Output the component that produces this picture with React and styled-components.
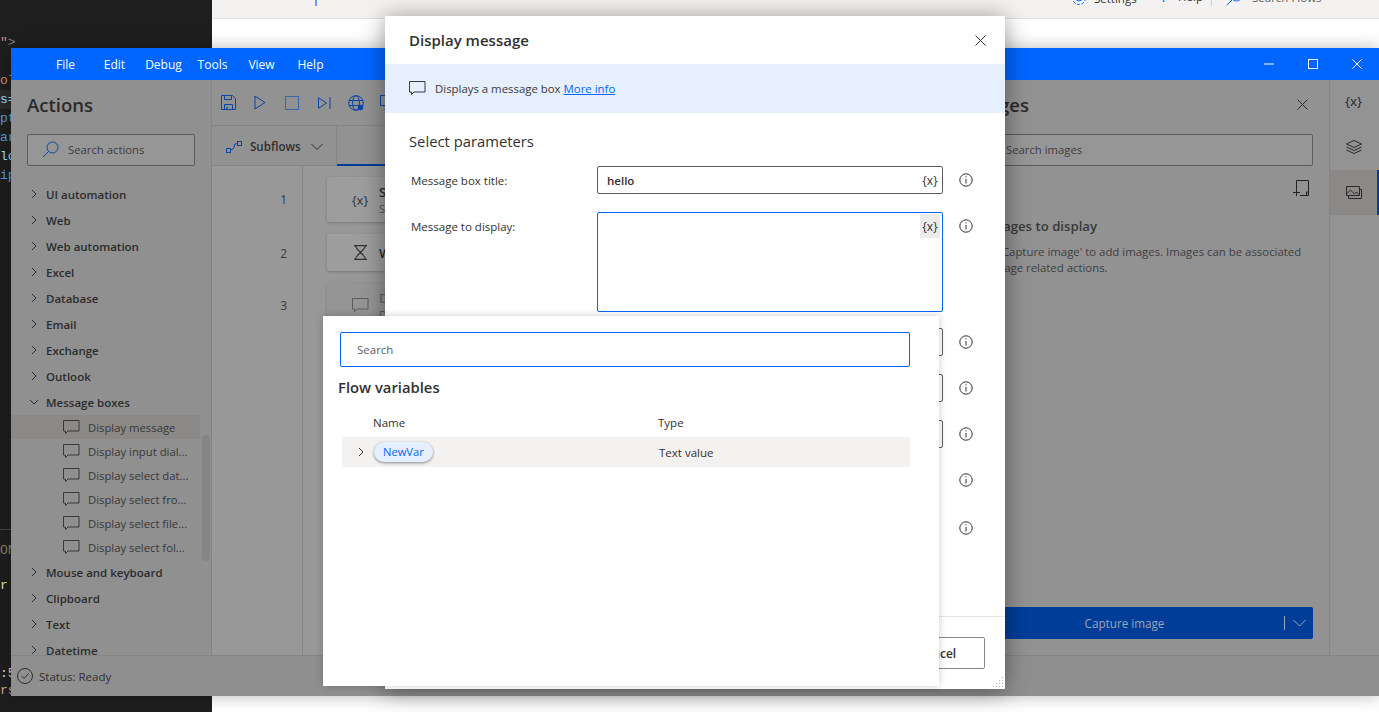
import React from "react";
import styled, { createGlobalStyle } from "styled-components";

const FONT = `"Open Sans", "Noto Sans", sans-serif`;

const GlobalStyle = createGlobalStyle`
  html, body {
    margin: 0;
    height: 100%;
    overflow: hidden;
    background: #fff;
    font-family: ${FONT};
  }
  * { box-sizing: border-box; }
`;

const Desktop = styled.div`
  position: relative;
  width: 1379px;
  height: 712px;
  overflow: hidden;
  display: flex;
`;

/* ---------- what lies behind the designer window ---------- */
const Editor = styled.div`
  width: 212px;
  background: #1e1e1e;
  display: flex;
  flex-direction: column;
  font: 13px/19px "Liberation Mono", monospace;
`;
const CodeLines = styled.div`
  padding-top: 33px;
  height: 530px;
  border-bottom: 1px solid #454545;
`;
const CodeLine = styled.div`
  height: ${(p) => p.$h || 19}px;
  line-height: ${(p) => p.$h || 19}px;
  color: ${(p) => p.$color || "#569cd6"};
  background: ${(p) => (p.$active ? "#2b2b2b" : "transparent")};
  white-space: pre;
`;
const TermLines = styled.div`
  padding-top: 11px;
`;
const FlowsPage = styled.div`
  flex: 1;
`;
const FlowsBar = styled.div`
  height: 19px;
  background: #f3f2f1;
  border-bottom: 1px solid #e1dfdd;
  display: flex;
  align-items: flex-end;
  overflow: hidden;
  padding-bottom: 12px;
  font-size: 11.5px;
  color: #323130;
`;
const BarItem = styled.div`
  display: flex;
  align-items: center;
  gap: 7px;
  flex: none;
  width: ${(p) => (p.$w ? `${p.$w}px` : "auto")};
  margin-left: ${(p) => p.$left || 0}px;
  color: #323130;
  svg { color: #0066ff; }
`;
const BarDivider = styled.div`
  width: 1px;
  height: 30px;
  background: #d2d0ce;
  flex: none;
  margin-left: 8px;
`;

/* ---------- designer window ---------- */
const Window = styled.div`
  position: absolute;
  left: 11px;
  top: 48px;
  width: 1368px;
  height: 648px;
  display: flex;
  flex-direction: column;
  background: #939393;
  box-shadow: 0 0 16px rgba(0, 0, 0, 0.28);
`;
const TitleBar = styled.div`
  height: 32px;
  flex: none;
  background: #0066ff;
  color: #fff;
  display: flex;
  align-items: center;
  padding-left: 30px;
  font-size: 12px;
`;
const MenuItem = styled.div`
  width: 49px;
  text-align: center;
`;
const WinControls = styled.div`
  margin-left: auto;
  display: flex;
`;
const WinButton = styled.div`
  width: 44px;
  height: 32px;
  display: flex;
  align-items: center;
  justify-content: center;
`;
const WinBody = styled.div`
  flex: 1;
  display: flex;
  min-height: 0;
`;
const StatusBar = styled.div`
  height: 41px;
  flex: none;
  border-top: 1px solid #858585;
  background: #8f8f8f;
  display: flex;
  align-items: center;
  gap: 6px;
  padding-left: 6px;
  font-size: 11.5px;
  color: #2f2f2f;
`;

const ActionsPanel = styled.div`
  width: 201px;
  flex: none;
  border-right: 1px solid #858585;
  background: #909090;
  display: flex;
  flex-direction: column;
`;
const PanelTitle = styled.div`
  font-size: 18.5px;
  font-weight: 600;
  line-height: 26px;
  color: #2b2b2b;
  height: 54px;
  padding-top: 12px;
`;
const ActionsHead = styled.div`
  padding: 0 16px;
  height: 101px;
  flex: none;
`;
const SearchBox = styled.div`
  height: 32px;
  border: 1px solid #5c5c5c;
  border-radius: 2px;
  background: #969696;
  display: flex;
  align-items: center;
  gap: 9px;
  padding: 0 0 1px ${(p) => p.$pad || 14}px;
  font-size: 11.3px;
  color: #3d3d3d;
  svg { color: #0a46a3; }
`;
const Tree = styled.div`
  position: relative;
  flex: 1;
  overflow: hidden;
`;
const GroupRow = styled.div`
  height: 26px;
  display: flex;
  align-items: center;
  padding-left: 18px;
  gap: 7px;
  font-size: 11.5px;
  font-weight: 600;
  color: #2c2c2c;
  white-space: nowrap;
`;
const LeafRow = styled.div`
  height: 24px;
  width: 189px;
  display: flex;
  align-items: center;
  padding-left: 52px;
  gap: 8px;
  font-size: 11.3px;
  color: #383838;
  white-space: nowrap;
  background: ${(p) => (p.$selected ? "#8a8987" : "transparent")};
`;
const ScrollThumb = styled.div`
  position: absolute;
  left: 191px;
  top: 254px;
  width: 8px;
  height: 126px;
  border-radius: 4px;
  background: #858585;
`;

const Designer = styled.div`
  flex: 1;
  min-width: 0;
  background: #989898;
  display: flex;
  flex-direction: column;
`;
const Toolbar = styled.div`
  height: 46px;
  flex: none;
  border-bottom: 1px solid #858585;
  background: #929292;
  display: flex;
  align-items: center;
`;
const ToolButton = styled.div`
  width: 32px;
  display: flex;
  justify-content: center;
  color: ${(p) => p.$color || "#0a46a3"};
`;
const TabsRow = styled.div`
  height: 40px;
  flex: none;
  border-bottom: 1px solid #858585;
  background: #929292;
  display: flex;
`;
const SubflowTab = styled.div`
  width: 125px;
  border-right: 1px solid #858585;
  display: flex;
  align-items: center;
  gap: 8px;
  padding: 2px 0 0 14px;
  font-size: 11.6px;
  font-weight: 600;
  color: #2f2f2f;
  svg { flex: none; }
`;
const MainTab = styled.div`
  flex: 1;
  border-bottom: 2px solid #003d99;
  margin-bottom: -1px;
`;
const Steps = styled.div`
  flex: 1;
  display: flex;
  min-height: 0;
`;
const Gutter = styled.div`
  width: 91px;
  flex: none;
  border-right: 1px solid #858585;
  padding-top: 11px;
`;
const LineNo = styled.div`
  height: ${(p) => p.$h}px;
  display: flex;
  align-items: center;
  justify-content: flex-end;
  padding-right: 15px;
  font-size: 12px;
  color: #3a3a3a;
`;
const StepList = styled.div`
  flex: 1;
  padding: 11px 24px 0;
  display: flex;
  flex-direction: column;
  gap: 12px;
`;
const StepCard = styled.div`
  height: ${(p) => p.$h}px;
  flex: none;
  background: ${(p) => (p.$dim ? "#959595" : "#9d9d9d")};
  border-radius: 2px;
  box-shadow: 0 1px 3px rgba(0, 0, 0, 0.22);
  display: flex;
  align-items: center;
  padding-left: 24px;
  gap: 10px;
  color: #2c2c2c;
`;
const StepIcon = styled.div`
  width: 18px;
  display: flex;
  justify-content: center;
  font-size: 13px;
  flex: none;
  color: ${(p) => (p.$dim ? "#5d5d5d" : "#333")};
`;
const StepTitle = styled.div`
  font-size: 13px;
  font-weight: 600;
  color: ${(p) => (p.$dim ? "#666" : "#2a2a2a")};
`;
const StepSub = styled.div`
  font-size: 11px;
  color: #555;
`;

const ImagesPanel = styled.div`
  width: 380px;
  flex: none;
  display: flex;
  flex-direction: column;
  padding: 0 16px 16px;
  background: #929292;
`;
const ImagesHead = styled.div`
  display: flex;
  justify-content: space-between;
  align-items: center;
  height: 54px;
  padding: 0 5px 5px 0;
  color: #2b2b2b;
`;
const ImagesTitle = styled.div`
  font-size: 18.5px;
  font-weight: 600;
`;
const AddRow = styled.div`
  display: flex;
  justify-content: flex-end;
  padding: 14px 3px 0 0;
  height: 46px;
  color: #222;
`;
const EmptyTitle = styled.div`
  margin-top: 4px;
  font-size: 13.2px;
  line-height: 20px;
  font-weight: 600;
  color: #383838;
`;
const EmptyText = styled.div`
  margin-top: 8px;
  font-size: 11.4px;
  line-height: 16px;
  color: #3f3f3f;
  white-space: nowrap;
`;
const CaptureButton = styled.div`
  margin-top: auto;
  height: 32px;
  border-radius: 2px;
  background: #003d99;
  color: #99a5b8;
  font-size: 11.7px;
  display: flex;
  align-items: center;
`;
const CaptureLabel = styled.div`
  flex: 1;
  text-align: center;
`;
const CaptureArrow = styled.div`
  width: 29px;
  height: 14px;
  border-left: 1px solid #99a5b8;
  display: flex;
  align-items: center;
  justify-content: center;
`;
const Rail = styled.div`
  width: 50px;
  flex: none;
  border-left: 1px solid #858585;
  background: #939393;
`;
const RailItem = styled.div`
  height: 45px;
  padding-bottom: ${(p) => p.$raise || 0}px;
  display: flex;
  align-items: center;
  justify-content: center;
  font-size: 13.5px;
  color: #2a2a2a;
  background: ${(p) => (p.$active ? "#8a8987" : "transparent")};
  border-right: 2px solid ${(p) => (p.$active ? "#003d99" : "transparent")};
`;

/* ---------- modal dialog ---------- */
const Dialog = styled.div`
  position: absolute;
  left: 385px;
  top: 16px;
  width: 620px;
  height: 673px;
  background: #fff;
  display: flex;
  flex-direction: column;
  box-shadow: 0 2px 22px rgba(0, 0, 0, 0.42);
`;
const DialogHead = styled.div`
  height: 48px;
  flex: none;
  display: flex;
  align-items: center;
  justify-content: space-between;
  padding: 0 19px 0 24px;
  font-size: 15px;
  font-weight: 600;
  color: #323130;
`;
const Banner = styled.div`
  height: 49px;
  flex: none;
  background: #e5effd;
  display: flex;
  align-items: center;
  gap: 9px;
  padding-left: 24px;
  font-size: 11.4px;
  color: #3b3a39;
`;
const MoreInfo = styled.a`
  color: #0066ff;
  text-decoration: underline;
  margin-left: 3px;
`;
const DialogBody = styled.div`
  flex: 1;
  padding: 16px 0 0 26px;
`;
const SectionTitle = styled.div`
  margin-left: -2px;
  height: 37px;
  line-height: 24px;
  font-size: 14.8px;
  color: #323130;
`;
const ParamList = styled.div`
  display: flex;
  flex-direction: column;
  gap: 18px;
`;
const ParamRow = styled.div`
  display: grid;
  grid-template-columns: 186px 346px 46px;
  min-height: 28px;
  margin-top: ${(p) => p.$top || 0}px;
`;
const ParamLabel = styled.div`
  height: 28px;
  font-size: 11.5px;
  line-height: 29px;
  color: #323130;
  white-space: nowrap;
  overflow: hidden;
`;
const ParamInput = styled.div`
  position: relative;
  height: ${(p) => p.$h || 28}px;
  border: 1px solid ${(p) => (p.$focus ? "#0066ff" : "#605e5c")};
  border-radius: 2px;
  padding-left: 9px;
  font-size: 11.5px;
  font-weight: 600;
  line-height: 27px;
  color: #323130;
`;
const VarToken = styled.div`
  position: absolute;
  top: 1px;
  right: 2px;
  width: 20px;
  height: 24px;
  display: flex;
  align-items: center;
  justify-content: center;
  font-size: 12px;
  font-weight: 400;
  color: #323130;
  background: ${(p) => (p.$hover ? "#edebe9" : "transparent")};
`;
const InfoCell = styled.div`
  height: 28px;
  display: flex;
  align-items: center;
  justify-content: center;
  color: #323130;
`;
const DialogFoot = styled.div`
  height: 73px;
  flex: none;
  border-top: 1px solid #e5e5e5;
  display: flex;
  justify-content: flex-end;
  gap: 8px;
  padding: 20px 20px 0 0;
  position: relative;
`;
const FootButton = styled.div`
  width: 96px;
  height: 32px;
  border: 1px solid #8a8886;
  border-radius: 2px;
  display: flex;
  align-items: center;
  justify-content: center;
  font-size: 12px;
  font-weight: 600;
  color: #323130;
`;
const Grip = styled.svg`
  position: absolute;
  right: 1px;
  bottom: 1px;
`;

/* ---------- variable picker over the dialog ---------- */
const Picker = styled.div`
  position: absolute;
  left: 323px;
  top: 316px;
  width: 616px;
  height: 370px;
  background: #fff;
  padding: 16px 29px 0 15px;
  box-shadow: 0 0 8px rgba(0, 0, 0, 0.2);
`;
const PickerSearch = styled.div`
  margin-left: 2px;
  height: 35px;
  border: 1px solid #0066ff;
  border-radius: 2px;
  padding-left: 16px;
  font-size: 11.5px;
  line-height: 33px;
  color: #605e5c;
`;
const PickerTitle = styled.div`
  margin-top: 10px;
  height: 21px;
  line-height: 21px;
  font-size: 14.8px;
  font-weight: 600;
  color: #323130;
`;
const VarGrid = styled.div`
  margin: 14px 0 0 4px;
  display: grid;
  grid-template-columns: 316px 1fr;
  font-size: 11.5px;
  color: #323130;
`;
const VarHead = styled.div`
  height: 25px;
  line-height: 22px;
  font-weight: 500;
  padding-left: ${(p) => p.$pad || 0}px;
`;
const VarCell = styled.div`
  height: 30px;
  background: #f3f2f1;
  display: flex;
  align-items: center;
  gap: 8px;
  padding-left: ${(p) => p.$pad || 0}px;
`;
const VarPill = styled.div`
  height: 20px;
  padding: 0 9px;
  border-radius: 10px;
  background: #e5effd;
  color: #0066ff;
  font-size: 11.2px;
  line-height: 20px;
  box-shadow: 0 1px 3px rgba(0, 0, 0, 0.45);
`;

/* ---------- icons ---------- */
const Svg = ({ w = 16, h = 16, vb, sw = 1, children }) => (
  <svg
    width={w}
    height={h}
    viewBox={vb || `0 0 ${w} ${h}`}
    fill="none"
    stroke="currentColor"
    strokeWidth={sw}
    style={{ display: "block", flex: "none" }}
  >
    {children}
  </svg>
);
const Chevron = ({ open, color = "currentColor" }) => (
  <Svg w={10} h={10}>
    <path d={open ? "M1 3l4 4 4-4" : "M3 1l4 4-4 4"} stroke={color} />
  </Svg>
);
const Bubble = () => (
  <Svg w={17} h={15}>
    <path d="M.5.5h15.5v10.5H5L2.5 13.5V11H.5z" />
  </Svg>
);
const Magnifier = () => (
  <Svg w={17} h={17}>
    <circle cx="10.5" cy="6.5" r="5.5" />
    <path d="M6.5 10.5L.8 16.2" />
  </Svg>
);
const Info = () => (
  <Svg w={14} h={14}>
    <circle cx="7" cy="7" r="6.2" />
    <path d="M7 6v4.5M7 3.2v1.2" />
  </Svg>
);
const Cross = ({ size = 11 }) => (
  <Svg w={size} h={size}>
    <path d={`M.5.5L${size - 0.5} ${size - 0.5}M${size - 0.5} .5L.5 ${size - 0.5}`} />
  </Svg>
);

const GROUPS_TOP = [
  "UI automation", "Web", "Web automation", "Excel", "Database",
  "Email", "Exchange", "Outlook",
];
const LEAVES = [
  "Display message", "Display input dial...", "Display select dat...",
  "Display select fro...", "Display select file...", "Display select fol...",
];
const GROUPS_BOTTOM = ["Mouse and keyboard", "Clipboard", "Text", "Datetime"];
const MENU = ["File", "Edit", "Debug", "Tools", "View", "Help"];

const App = () => (
  <Desktop>
    <GlobalStyle />

    <Editor>
      <CodeLines>
        <CodeLine $color="#ce9178">"<span style={{ color: "#808080" }}>&gt;</span></CodeLine>
        <CodeLine />
        <CodeLine $color="#ce9178">ol</CodeLine>
        <CodeLine $color="#9cdcfe" $active>s=</CodeLine>
        <CodeLine>pt</CodeLine>
        <CodeLine>ar</CodeLine>
        <CodeLine $color="#9cdcfe">lo</CodeLine>
        <CodeLine>ip</CodeLine>
      </CodeLines>
      <TermLines>
        <CodeLine $color="#8a8060">ON</CodeLine>
        <CodeLine $h={16} />
        <CodeLine $color="#e6d9a8">r</CodeLine>
        <CodeLine $h={69} />
        <CodeLine $color="#d7d7d7">:5</CodeLine>
        <CodeLine $color="#c8a98c" $h={16}>rs</CodeLine>
      </TermLines>
    </Editor>

    <FlowsPage>
      <FlowsBar>
        <BarItem $left={103} $w={80}>
          <svg width="2" height="22"><rect width="2" height="22" fill="#6aa0ff" /></svg>
          <span style={{ marginLeft: 8 }}>New flow</span>
        </BarItem>
        <BarItem $left={676} $w={83}>
          <Svg w={16} h={16}>
            <circle cx="8" cy="8" r="3" />
            <circle cx="8" cy="8" r="6.5" strokeDasharray="3 1.5" />
          </Svg>
          Settings
        </BarItem>
        <BarItem $left={7} $w={42}>
          <span style={{ color: "#0066ff", fontSize: 14 }}>?</span>
          <span style={{ marginLeft: 4 }}>Help</span>
        </BarItem>
        <BarDivider />
        <BarItem $left={14}>
          <Magnifier />
          <span style={{ marginLeft: 2, color: "#605e5c" }}>Search Flows</span>
        </BarItem>
      </FlowsBar>
    </FlowsPage>

    <Window>
      <TitleBar>
        {MENU.map((m) => <MenuItem key={m}>{m}</MenuItem>)}
        <WinControls>
          <WinButton><Svg w={10} h={10}><path d="M0 5h10" /></Svg></WinButton>
          <WinButton><Svg w={10} h={10}><rect x=".5" y=".5" width="9" height="9" /></Svg></WinButton>
          <WinButton><Cross size={10} /></WinButton>
        </WinControls>
      </TitleBar>

      <WinBody>
        <ActionsPanel>
          <ActionsHead>
            <PanelTitle>Actions</PanelTitle>
            <SearchBox><Magnifier />Search actions</SearchBox>
          </ActionsHead>
          <Tree>
            {GROUPS_TOP.map((g) => (
              <GroupRow key={g}><Chevron />{g}</GroupRow>
            ))}
            <GroupRow><Chevron open />Message boxes</GroupRow>
            {LEAVES.map((l, i) => (
              <LeafRow key={l} $selected={i === 0}><Bubble />{l}</LeafRow>
            ))}
            {GROUPS_BOTTOM.map((g) => (
              <GroupRow key={g}><Chevron />{g}</GroupRow>
            ))}
            <ScrollThumb />
          </Tree>
        </ActionsPanel>

        <Designer>
          <Toolbar>
            <ToolButton>
              <Svg w={15} h={15}>
                <path d="M.5.5h11l3 3v11H.5zM3.5.5v4h7v-4M3.5 14.5v-5h8v5M6 11.5v3" />
              </Svg>
            </ToolButton>
            <ToolButton><Svg w={12} h={15}><path d="M1 1l10 6.5L1 14z" /></Svg></ToolButton>
            <ToolButton $color="#3a66ad"><Svg w={14} h={14}><rect x=".5" y=".5" width="13" height="13" /></Svg></ToolButton>
            <ToolButton>
              <Svg w={13} h={12}><path d="M.5 .8l8 5.2-8 5.2zM12 0v12" /></Svg>
            </ToolButton>
            <ToolButton>
              <Svg w={16} h={16}>
                <circle cx="8" cy="8" r="7.3" />
                <ellipse cx="8" cy="8" rx="3.4" ry="7.3" />
                <path d="M1 5.5h14M1 10.5h14" />
                <circle cx="12.5" cy="12.5" r="2.7" fill="currentColor" stroke="none" />
              </Svg>
            </ToolButton>
            <ToolButton>
              <Svg w={16} h={15}><path d="M.5.5h15v10H.5zM8 10.5v4M4.5 14.5h7" /></Svg>
            </ToolButton>
          </Toolbar>
          <TabsRow>
            <SubflowTab>
              <span style={{ color: "#0a46a3", display: "block" }}>
                <Svg w={16} h={12}>
                  <rect x=".5" y="7.5" width="4" height="4" />
                  <rect x="11.5" y=".5" width="4" height="4" />
                  <path d="M4.5 9l3-1.5L9 3l2.5-.5" />
                </Svg>
              </span>
              Subflows
              <span style={{ marginLeft: 2 }}>
                <Svg w={12} h={8}><path d="M.5 1l5.5 5.5L11.5 1" /></Svg>
              </span>
            </SubflowTab>
            <MainTab />
          </TabsRow>
          <Steps>
            <Gutter>
              <LineNo $h={45}>1</LineNo>
              <LineNo $h={62}>2</LineNo>
              <LineNo $h={42}>3</LineNo>
            </Gutter>
            <StepList>
              <StepCard $h={45}>
                <StepIcon>{"{x}"}</StepIcon>
                <div>
                  <StepTitle>Set variable</StepTitle>
                  <StepSub>Set NewVar to hello</StepSub>
                </div>
              </StepCard>
              <StepCard $h={37}>
                <StepIcon>
                  <Svg w={15} h={15} sw={1.2}><path d="M1 .6h13M1 14.4h13M2.5.6c0 4.5 10 9 10 13.8M12.5.6c0 4.5-10 9-10 13.8" /></Svg>
                </StepIcon>
                <StepTitle>Wait</StepTitle>
              </StepCard>
              <StepCard $h={44} $dim>
                <StepIcon $dim><Bubble /></StepIcon>
                <div>
                  <StepTitle $dim>Display message</StepTitle>
                  <StepSub>Display message</StepSub>
                </div>
              </StepCard>
            </StepList>
          </Steps>
        </Designer>

        <ImagesPanel>
          <ImagesHead>
            <ImagesTitle>Images</ImagesTitle>
            <Cross />
          </ImagesHead>
          <SearchBox $pad={40}>Search images</SearchBox>
          <AddRow>
            <Svg w={17} h={17}>
              <path d="M3.5 9.5V.5H15.5V15.5H7M0 12.5H7M3.5 9.5V16M13.5 15.5V12H15.5" />
            </Svg>
          </AddRow>
          <EmptyTitle>No images to display</EmptyTitle>
          <EmptyText>
            Select 'Capture image' to add images. Images can be associated<br />
            with image related actions.
          </EmptyText>
          <CaptureButton>
            <CaptureLabel>Capture image</CaptureLabel>
            <CaptureArrow>
              <Svg w={13} h={8}><path d="M.5 1l6 6 6-6" /></Svg>
            </CaptureArrow>
          </CaptureButton>
        </ImagesPanel>

        <Rail>
          <RailItem $raise={4}>{"{x}"}</RailItem>
          <RailItem $raise={2}>
            <Svg w={16} h={14}>
              <path d="M8 .5l7.5 3.5L8 7.5.5 4zM.5 7L8 10.5 15.5 7M.5 10L8 13.5 15.5 10" />
            </Svg>
          </RailItem>
          <RailItem $active>
            <Svg w={16} h={13}>
              <path d="M.5.5h13v9H.5zM.5 8l4-4 4 4 2-2 3 3M2.5 9.5v3h13v-9h-2" />
            </Svg>
          </RailItem>
        </Rail>
      </WinBody>

      <StatusBar>
        <Svg w={16} h={16}>
          <circle cx="8" cy="8" r="7.5" />
          <path d="M4.5 8l2.5 2.5 4.5-5" />
        </Svg>
        Status: Ready
      </StatusBar>
    </Window>

    <Dialog>
      <DialogHead>
        Display message
        <Cross />
      </DialogHead>
      <Banner>
        <Bubble />
        <span>
          Displays a message box
          <MoreInfo href="#info">More info</MoreInfo>
        </span>
      </Banner>
      <DialogBody>
        <SectionTitle>Select parameters</SectionTitle>
        <ParamList>
          <ParamRow>
            <ParamLabel>Message box title:</ParamLabel>
            <ParamInput>hello<VarToken>{"{x}"}</VarToken></ParamInput>
            <InfoCell><Info /></InfoCell>
          </ParamRow>
          <ParamRow>
            <ParamLabel>Message to display:</ParamLabel>
            <ParamInput $h={100} $focus><VarToken $hover>{"{x}"}</VarToken></ParamInput>
            <InfoCell><Info /></InfoCell>
          </ParamRow>
          <ParamRow $top={-2}>
            <ParamLabel>Message box icon:</ParamLabel>
            <ParamInput />
            <InfoCell><Info /></InfoCell>
          </ParamRow>
          <ParamRow>
            <ParamLabel>Message box buttons:</ParamLabel>
            <ParamInput />
            <InfoCell><Info /></InfoCell>
          </ParamRow>
          <ParamRow>
            <ParamLabel>Default button:</ParamLabel>
            <ParamInput />
            <InfoCell><Info /></InfoCell>
          </ParamRow>
          <ParamRow>
            <ParamLabel>Keep message box always on top:</ParamLabel>
            <div />
            <InfoCell><Info /></InfoCell>
          </ParamRow>
          <ParamRow $top={2}>
            <ParamLabel>Close message box automatically:</ParamLabel>
            <div />
            <InfoCell><Info /></InfoCell>
          </ParamRow>
        </ParamList>
      </DialogBody>
      <DialogFoot>
        <FootButton>Save</FootButton>
        <FootButton>Cancel</FootButton>
        <Grip width="12" height="12" viewBox="0 0 12 12" fill="#b4b6c8">
          <rect x="10" y="1" width="1" height="1" />
          <rect x="7" y="4" width="1" height="1" /><rect x="10" y="4" width="1" height="1" />
          <rect x="4" y="7" width="1" height="1" /><rect x="7" y="7" width="1" height="1" /><rect x="10" y="7" width="1" height="1" />
          <rect x="1" y="10" width="1" height="1" /><rect x="4" y="10" width="1" height="1" /><rect x="7" y="10" width="1" height="1" /><rect x="10" y="10" width="1" height="1" />
        </Grip>
      </DialogFoot>
    </Dialog>

    <Picker>
      <PickerSearch>Search</PickerSearch>
      <PickerTitle>Flow variables</PickerTitle>
      <VarGrid>
        <VarHead $pad={31}>Name</VarHead>
        <VarHead>Type</VarHead>
        <VarCell $pad={14}>
          <Chevron />
          <VarPill>NewVar</VarPill>
        </VarCell>
        <VarCell $pad={1}>Text value</VarCell>
      </VarGrid>
    </Picker>
  </Desktop>
);

export default App;
